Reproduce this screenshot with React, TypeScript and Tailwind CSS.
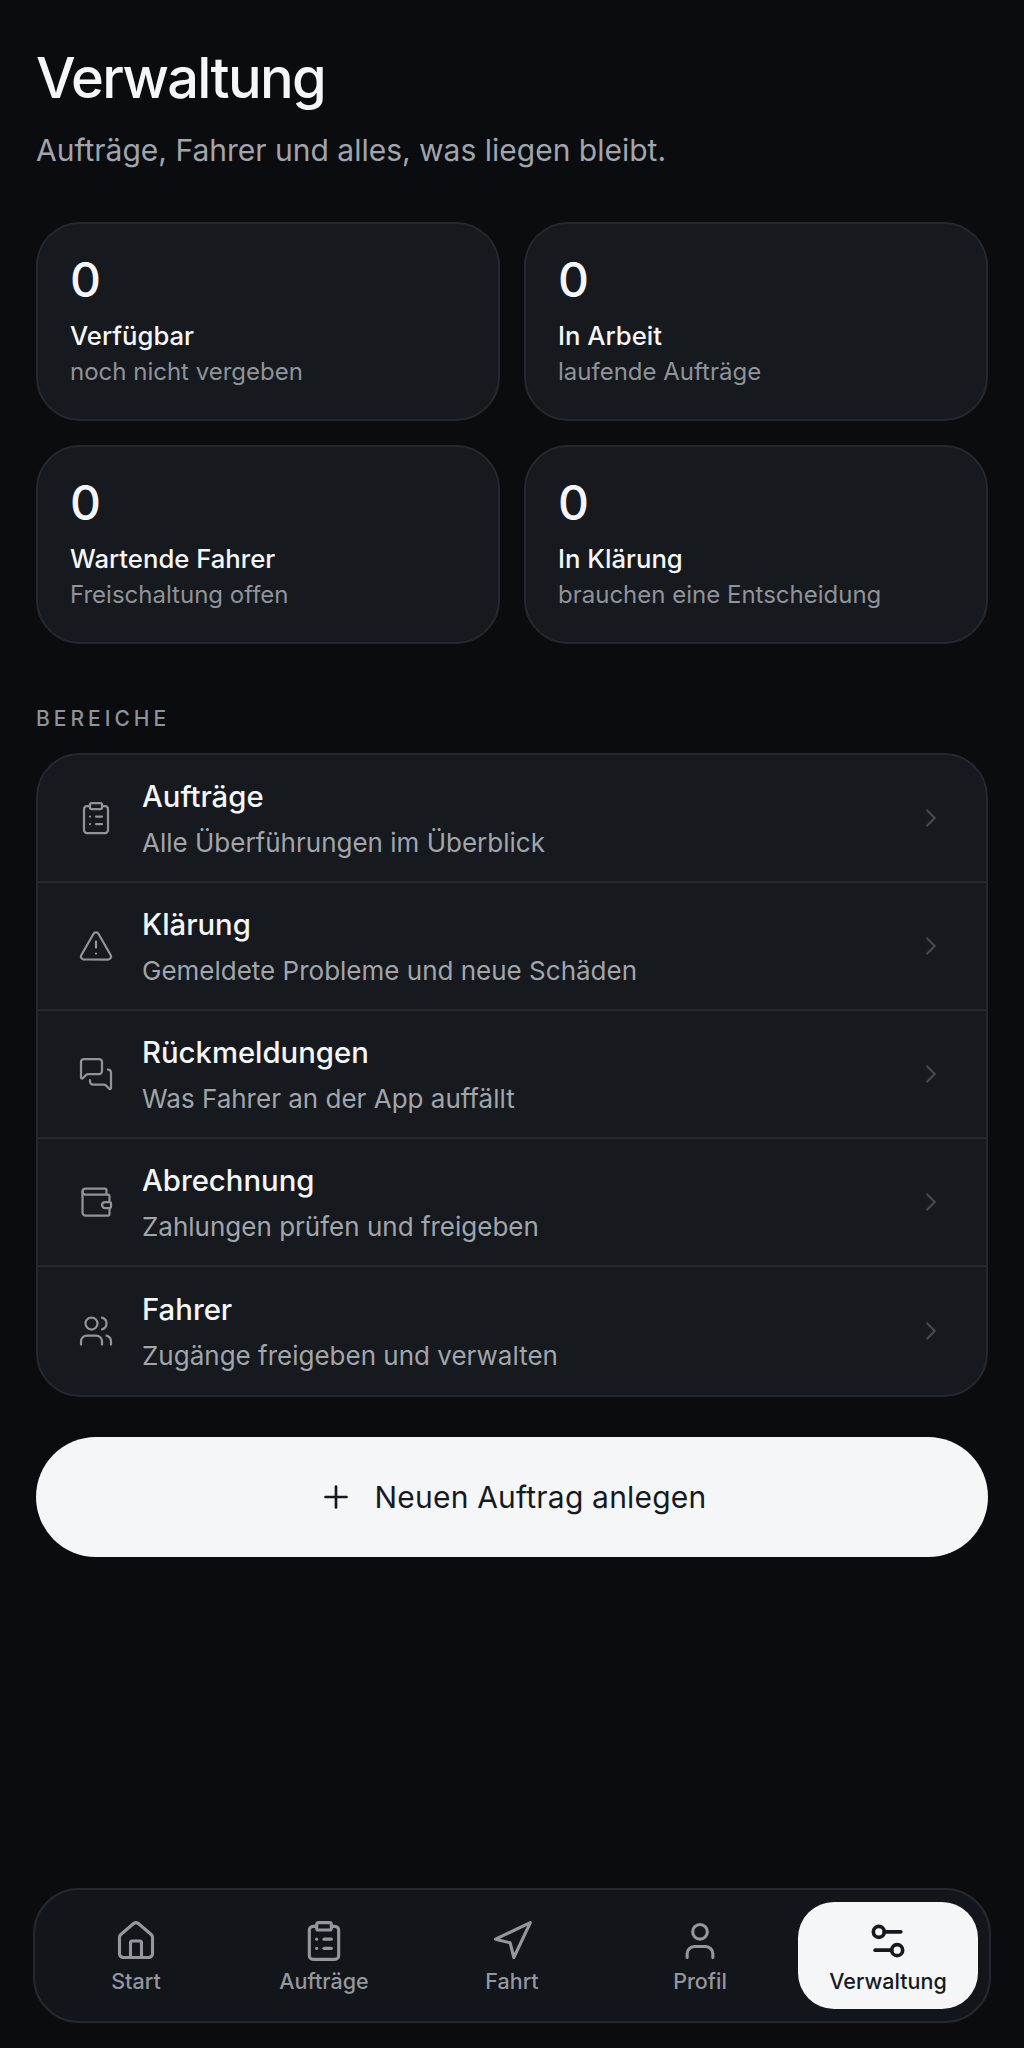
import { ChevronRight, ClipboardList, House, MessagesSquare, Navigation, Plus, Settings2, TriangleAlert, User, Users, Wallet } from 'lucide-react';

const stats = [
  { label: 'Verfügbar', hint: 'noch nicht vergeben' },
  { label: 'In Arbeit', hint: 'laufende Aufträge' },
  { label: 'Wartende Fahrer', hint: 'Freischaltung offen' },
  { label: 'In Klärung', hint: 'brauchen eine Entscheidung' },
];

const areas = [
  { title: 'Aufträge', text: 'Alle Überführungen im Überblick', icon: ClipboardList },
  { title: 'Klärung', text: 'Gemeldete Probleme und neue Schäden', icon: TriangleAlert },
  { title: 'Rückmeldungen', text: 'Was Fahrer an der App auffällt', icon: MessagesSquare },
  { title: 'Abrechnung', text: 'Zahlungen prüfen und freigeben', icon: Wallet },
  { title: 'Fahrer', text: 'Zugänge freigeben und verwalten', icon: Users },
];

const tabs = [
  { label: 'Start', icon: House },
  { label: 'Aufträge', icon: ClipboardList },
  { label: 'Fahrt', icon: Navigation },
  { label: 'Profil', icon: User },
  { label: 'Verwaltung', icon: Settings2, active: true },
];

export default function App() {
  return (
    <div className="h-[2048px] bg-[#0a0c10] px-9 pt-[42px] flex flex-col font-['Inter',sans-serif] text-[#f4f6f8] overflow-hidden">
      <h1 className="text-[56px] leading-[72px] font-medium tracking-[-1.7px]">Verwaltung</h1>
      <p className="mt-[16px] text-[30px] leading-[40px] text-[#a1a5ac]">Aufträge, Fahrer und alles, was liegen bleibt.</p>

      <div className="mt-[52px] grid grid-cols-2 gap-x-[24px] gap-y-[24px]">
        {stats.map((s) => (
          <div key={s.label} className="h-[199px] rounded-[44px] border-2 border-[#25282e] bg-[#16191d] px-[32px] pt-[28px]">
            <div className="text-[48px] leading-[56px] font-medium">0</div>
            <div className="mt-[11px] text-[25.7px] leading-[34px] font-medium">{s.label}</div>
            <div className="mt-[3px] text-[24px] leading-[32px] text-[#8f939a]">{s.hint}</div>
          </div>
        ))}
      </div>

      <div className="mt-[61px] text-[21px] leading-[28px] tracking-[4px] font-medium text-[#8f939a]">BEREICHE</div>

      <div className="mt-[20px] rounded-[44px] border-2 border-[#25282e] bg-[#16191d] overflow-hidden">
        {areas.map((a, i) => (
          <div key={a.title} className={`h-[128px] flex items-center pl-[40px] pr-[40px] ${i < areas.length - 1 ? 'border-b-2 border-[#25282e]' : ''}`}>
            <a.icon size={36} strokeWidth={1.5} className="text-[#8f939a] shrink-0" />
            <div className="ml-[28px] flex-1 pt-[1px]">
              <div className="text-[29.3px] leading-[38px] font-medium">{a.title}</div>
              <div className="mt-[10px] text-[26px] leading-[34px] text-[#a1a5ac]">{a.text}</div>
            </div>
            <ChevronRight size={30} strokeWidth={1.7} className="text-[#454a52]" />
          </div>
        ))}
      </div>

      <button className="mt-[40px] h-[120px] rounded-full bg-[#f4f6f8] text-[#16191d] flex items-center justify-center gap-[21px] text-[30px] font-normal tracking-[0.2px]">
        <Plus size={36} strokeWidth={1.8} />
        Neuen Auftrag anlegen
      </button>

      <nav className="mt-auto mb-[25px] -mx-[3px] h-[135px] rounded-[46px] border-2 border-[#25282e] bg-[#12151a] grid grid-cols-5 gap-x-[8px] px-[11px] py-[12px]">
        {tabs.map((t) => (
          <div key={t.label} className={`flex flex-col items-center justify-center pt-[4px] rounded-[36px] ${t.active ? 'bg-[#f4f6f8] text-[#16191d]' : 'text-[#94979e]'}`}>
            <t.icon size={44} strokeWidth={t.active ? 2 : 1.7} />
            <span className="mt-[3px] text-[21.5px] leading-[30px] font-medium">{t.label}</span>
          </div>
        ))}
      </nav>
    </div>
  );
}
